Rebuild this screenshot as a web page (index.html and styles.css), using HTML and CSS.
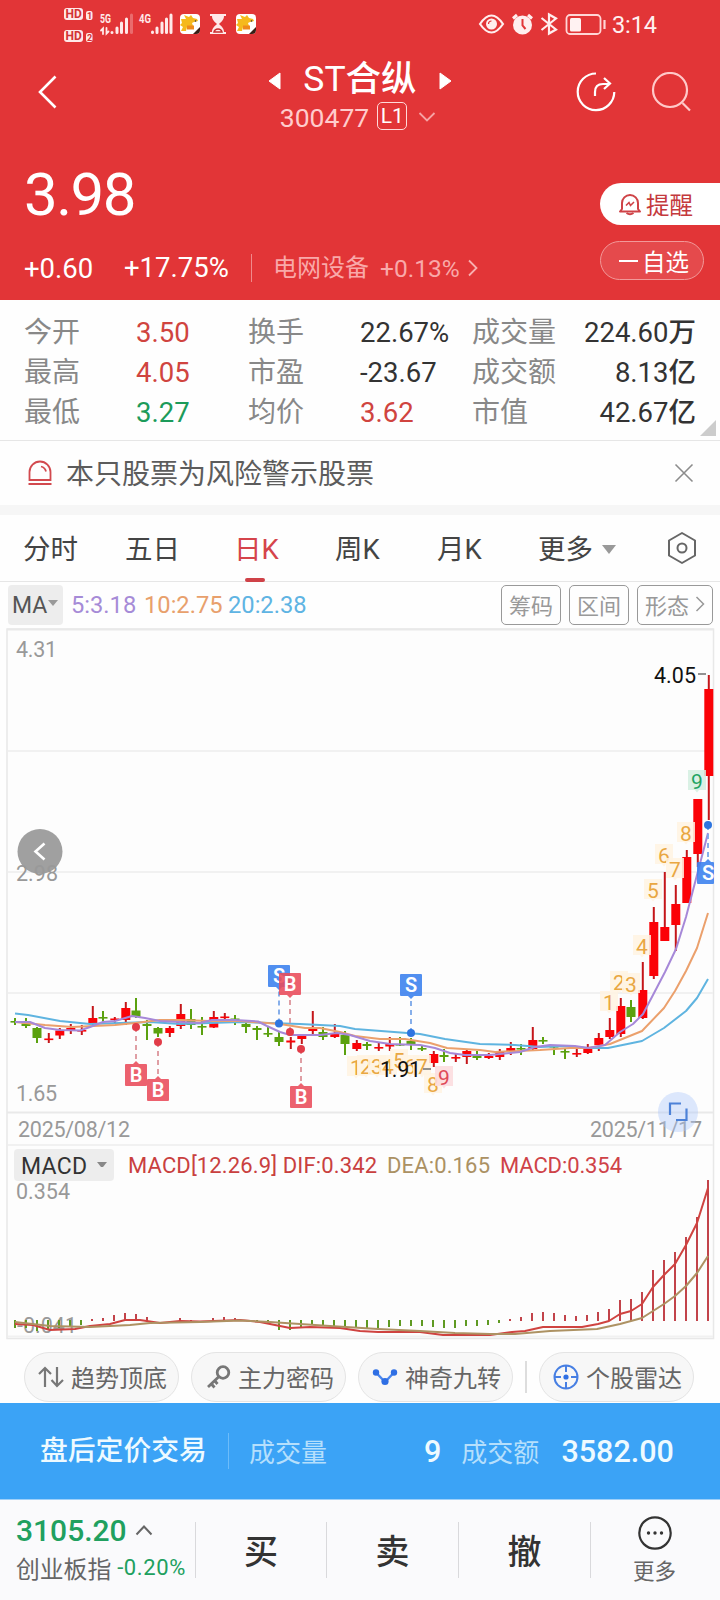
FILE: index.html
```html
<!DOCTYPE html>
<html lang="zh-CN">
<head>
  <meta charset="UTF-8">
  <meta name="viewport" content="width=device-width, initial-scale=1.0">
  <title>ST合纵 300477</title>
  <link rel="stylesheet" href="styles.css">
</head>
<body>
  <div class="app">
    <header class="header">
      <!-- Phone status bar -->
      <div class="status-bar">
        <svg class="status-left" width="200" height="40" viewBox="60 4 200 40">
          <g fill="#ffe9e9">
            <rect x="64" y="8" width="19" height="12" rx="3"/>
            <rect x="86" y="11" width="6.500" height="9" rx="2"/>
            <rect x="64" y="30" width="19" height="12" rx="3"/>
            <rect x="86" y="33" width="6.500" height="9" rx="2"/>
          </g>
          <g class="hd">
            <text x="65.500" y="18.200">HD</text><text x="87" y="18.600" class="sim">1</text>
            <text x="65.500" y="40.200">HD</text><text x="87" y="40.600" class="sim">2</text>
          </g>
          <g class="net">
            <text x="100" y="23" textLength="11" lengthAdjust="spacingAndGlyphs">5G</text>
            <text x="139" y="23" textLength="12" lengthAdjust="spacingAndGlyphs">4G</text>
          </g>
          <g stroke="#ffe9e9" stroke-width="3" stroke-linecap="round">
            <path d="M112 32.500v0M117 28v4.500M121.500 23v9.500M126.500 19v13.500"/>
            <path d="M131.500 15v17.500" opacity=".3"/>
            <path d="M152.500 32v.5M157 28v4.500M162 23v9.500M166.500 19v13.500M171 15v17.500"/>
            <path d="M103 34v-5.500l-2 2M106.500 28v5.500l2-2" fill="none" stroke-width="1.800"/>
          </g>
          <g id="app-badge">
            <rect x="180" y="14" width="20" height="20" rx="4" fill="#fff"/>
            <path d="M181 19l5 0-2-4 5 2 2-2 2 3 4 1 1 2-4 1-2 1 1 3-6 1-1 4h-5l2-4-3-2 2-2z" fill="#f5b91d"/>
            <path d="M187 25.500h7v4h-7z" fill="#ef8a1c"/>
            <path d="M193 34l7-7v3q0 4-4 4z" fill="#3a1f16"/>
            <circle cx="195.500" cy="21" r=".8" fill="#333"/>
          </g>
          <use href="#app-badge" x="56"/>
          <path d="M210 14h16v2h-2c0 4-3 6-5 8c2 2 5 4 5 8h2v2h-16v-2h2c0-4 3-6 5-8c-2-2-5-4-5-8h-2z" fill="#ffe9e9"/>
          <path d="M214 32c1-4 7-4 8 0z" fill="none" stroke="#c92d2f" stroke-width="1.500"/>
        </svg>
        <svg class="status-right" width="180" height="40" viewBox="476 4 180 40">
          <path d="M480 24q11.500-17 23 0q-11.500 17-23 0z" fill="none" stroke="#ffeeee" stroke-width="2.200"/>
          <circle cx="491.500" cy="24" r="5.500" fill="#ffeeee"/>
          <path d="M488.500 24a3 3 0 0 1 3-3" fill="none" stroke="#e23537" stroke-width="1.200"/>
          <circle cx="522.500" cy="25" r="9.500" fill="#ffeeee"/>
          <path d="M522.500 19v6.500l3 3.500" fill="none" stroke="#e23537" stroke-width="2"/>
          <path d="M513 18.500l4-3.500M532 18.500l-4-3.500" stroke="#ffeeee" stroke-width="3"/>
          <path d="M541.500 18l14.500 11.500-7 4V14.500l7 4L541.500 30" fill="none" stroke="#ffeeee" stroke-width="2.200"/>
          <rect x="566.500" y="15" width="34" height="19" rx="3.500" fill="none" stroke="#ffd6d6" stroke-width="1.800"/>
          <rect x="570" y="18" width="11" height="13.500" rx="1.500" fill="#fff2f2"/>
          <path d="M604.500 20v9" stroke="#ffd6d6" stroke-width="2.200"/>
          <text x="612" y="33" class="clock" textLength="45">3:14</text>
        </svg>
      </div>

      <!-- Title row -->
      <div class="nav">
        <svg class="back" width="24" height="36" viewBox="0 0 24 36"><path d="M20.500 2.500L5 18l15.500 15.500" fill="none" stroke="#fff" stroke-width="2.600"/></svg>
        <div class="title">
          <div class="title-name">
            <svg width="13" height="18" viewBox="0 0 13 18"><path d="M1 9L12 1v16z" fill="#fff" stroke="#fff" stroke-linejoin="round"/></svg>
            <h1>ST合纵</h1>
            <svg width="13" height="18" viewBox="0 0 13 18"><path d="M12 9L1 1v16z" fill="#fff" stroke="#fff" stroke-linejoin="round"/></svg>
          </div>
          <div class="title-code">
            <span>300477</span>
            <span class="level">L1</span>
            <svg width="18" height="12" viewBox="0 0 18 12"><path d="M1.500 2L9 9.500 16.500 2" fill="none" stroke="#f6a3a4" stroke-width="1.800"/></svg>
          </div>
        </div>
        <div class="nav-icons">
          <svg width="40" height="40" viewBox="0 0 40 40" fill="none" stroke="#fff" stroke-width="2.200">
            <path d="M20 1.500A18.300 18.300 0 1 0 38.300 20"/>
            <path d="M19 24v-4q0-8 8-8h6M28 6l6 5.500-6 5.500"/>
          </svg>
          <svg width="40" height="40" viewBox="0 0 40 40" fill="none" stroke="#ffc9c9" stroke-width="2.200">
            <circle cx="19" cy="18" r="17"/><path d="M31.500 31l7.500 7.500"/>
          </svg>
        </div>
      </div>

      <!-- Price -->
      <div class="quote">
        <div class="quote-main">
          <div class="price">3.98</div>
          <div class="change">
            <span class="diff">+0.60</span>
            <span class="percent">+17.75%</span>
            <span class="sector">电网设备</span>
            <span class="sector-rate">+0.13%</span>
            <svg width="12" height="18" viewBox="0 0 12 18"><path d="M2 1.500L9.500 9 2 16.500" fill="none" stroke="#f8b0b0" stroke-width="1.800"/></svg>
          </div>
        </div>
        <div class="quote-actions">
          <button class="btn-alert">
            <svg width="24" height="24" viewBox="0 0 24 24" fill="none" stroke="#cf4347" stroke-width="2">
              <path d="M4 17V11a8 8 0 0 1 16 0v6l2 2.500H2z" stroke-linejoin="round"/>
              <path d="M8.500 21q3.500 2.500 7 0"/><path d="M8 13.500l3-3 1.500 3 3.500-3.500" stroke-width="1.600"/>
            </svg><span>提醒</span>
          </button>
          <button class="btn-watch"><i class="minus"></i>自选</button>
        </div>
      </div>
    </header>

    <!-- Key figures -->
    <section class="stats">
      <span class="label">今开</span><span class="up">3.50</span>
      <span class="label">换手</span><span>22.67%</span>
      <span class="label">成交量</span><span class="right">224.60万</span>
      <span class="label">最高</span><span class="up">4.05</span>
      <span class="label">市盈</span><span>-23.67</span>
      <span class="label">成交额</span><span class="right">8.13亿</span>
      <span class="label">最低</span><span class="down">3.27</span>
      <span class="label">均价</span><span class="up">3.62</span>
      <span class="label">市值</span><span class="right">42.67亿</span>
      <i class="corner"></i>
    </section>

    <div class="notice">
      <svg width="26" height="26" viewBox="0 0 26 26" fill="none" stroke="#d2494e" stroke-width="1.800">
        <path d="M2.500 20V12a10.500 10.500 0 0 1 21 0v8zM1.500 24h23M14 6.500q4 1 5 5"/>
      </svg>
      <span>本只股票为风险警示股票</span>
      <svg class="close" width="20" height="20" viewBox="0 0 20 20"><path d="M1.500 1.500l17 17M18.500 1.500l-17 17" stroke="#8c8c8c" stroke-width="1.600"/></svg>
    </div>

    <nav class="tabs">
      <span class="tab">分时</span>
      <span class="tab">五日</span>
      <span class="tab active">日K</span>
      <span class="tab">周K</span>
      <span class="tab">月K</span>
      <span class="tab">更多<i class="caret"></i></span>
      <svg width="30" height="34" viewBox="0 0 30 34" fill="none" stroke="#666" stroke-width="2">
        <path d="M15 2l13 7.500v15L15 32 2 24.500v-15z" stroke-linejoin="round"/><circle cx="15" cy="17" r="4.500"/>
      </svg>
    </nav>

    <div class="ma-bar">
      <span class="ma-select">MA<i class="caret small"></i></span>
      <span class="ma5">5:3.18</span>
      <span class="ma10">10:2.75</span>
      <span class="ma20">20:2.38</span>
      <div class="ma-buttons">
        <button>筹码</button>
        <button>区间</button>
        <button>形态<svg width="10" height="16" viewBox="0 0 10 16"><path d="M1.500 1L8.500 8l-7 7" fill="none" stroke="#999" stroke-width="1.500"/></svg></button>
      </div>
    </div>

    <!-- K line and MACD -->
    <svg class="chart" width="720" height="712" viewBox="0 628 720 712">
      <rect x="7" y="629" width="706.500" height="709.500" fill="#fdfdfd" stroke="#e8e8e8" stroke-width="1.500"/>
      <path d="M7 629.500H713M7 1112.500H713" stroke="#e9e9e9" stroke-width="2.200" fill="none"/>
      <path d="M8 751H713M8 872H713M8 993H713M8 1145H713M8 1336.500H713" stroke="#f1f1f1" stroke-width="2" fill="none"/>
      <g class="axis">
        <text x="16" y="657" textLength="41">4.31</text>
        <text x="16" y="1101" textLength="41">1.65</text>
        <text x="18" y="1137" textLength="112">2025/08/12</text>
        <text x="16" y="1199" textLength="54">0.354</text>
        <text x="17" y="1333" textLength="60">-0.041</text>
      </g>
      <g id="candles"></g>
      <g id="lines"></g>
      <g id="nine"></g>
      <g id="trades"></g>
      <text class="extreme" x="654" y="682.500" textLength="42">4.05</text>
      <path d="M698 674h8" stroke="#777" stroke-width="1.600"/>
      <text class="extreme" x="380" y="1077" textLength="41">1.91</text>
      <path d="M423 1069h8" stroke="#777" stroke-width="1.600"/>

      <circle cx="40" cy="851.500" r="22.500" fill="#969696" opacity=".9"/>
      <path d="M44.500 843.500l-9 8 9 8" fill="none" stroke="#fff" stroke-width="2.600"/>
      <g class="axis">
        <text x="16" y="881" textLength="42">2.98</text>
        <text x="590" y="1137" textLength="112">2025/11/17</text>
      </g>
      <circle cx="678" cy="1112" r="20" fill="#a9c5fa" opacity=".4"/>
      <path d="M670 1115v-11.500h11M676 1120h10.500v-11.500" fill="none" stroke="#4d82d8" stroke-width="2.200"/>

      <rect x="14" y="1149" width="100" height="32" rx="4" fill="#ededed"/>
      <text x="21" y="1174" class="macd-name" textLength="66">MACD</text>
      <path d="M97 1162h10l-4 5h-2z" fill="#888"/>
      <g class="macd-text">
        <text x="128" y="1173" fill="#c9403f" textLength="249">MACD[12.26.9] DIF:0.342</text>
        <text x="387" y="1173" fill="#ab9163" textLength="103">DEA:0.165</text>
        <text x="500" y="1173" fill="#cf4248" textLength="122">MACD:0.354</text>
      </g>
      <g id="macd"></g>
    </svg>

    <!-- Indicator shortcuts -->
    <div class="tools">
      <button class="tool">
        <svg width="26" height="22" viewBox="0 0 26 22" fill="none" stroke="#777" stroke-width="2.200"><path d="M7 21V2M1 8l6-6 6 6M19 1v19M13.500 14l5.500 6 6-6"/></svg><span>趋势顶底</span>
      </button>
      <button class="tool">
        <svg width="26" height="24" viewBox="0 0 26 24" fill="none" stroke="#777" stroke-width="2.800"><circle cx="18" cy="7.500" r="5.800"/><path d="M14 11.500L3 22M6 18.500l3.500 4M9.500 15.500l3 3.500"/></svg><span>主力密码</span>
      </button>
      <button class="tool">
        <svg width="26" height="18" viewBox="0 0 26 18"><path d="M4 4.500l9 9.500 9-9.500" fill="none" stroke="#4a86ee" stroke-width="2.400"/><g fill="#2f6fe4"><circle cx="4" cy="4.500" r="3.200"/><circle cx="22" cy="4.500" r="3.200"/><circle cx="13" cy="13.500" r="3.600"/></g></svg><span>神奇九转</span>
      </button>
      <i class="tool-divider"></i>
      <button class="tool">
        <svg width="26" height="26" viewBox="0 0 26 26" fill="none" stroke="#477fe3" stroke-width="2"><circle cx="13" cy="13" r="11.500"/><path d="M13 2v6M13 18v6M2 13h6M18 13h6"/><circle cx="13" cy="13" r="2.600" fill="#2f6fe4" stroke="none"/></svg><span>个股雷达</span>
      </button>
    </div>

    <div class="after-hours">
      <strong>盘后定价交易</strong>
      <span class="muted">成交量</span>
      <b class="volume">9</b>
      <span class="muted">成交额</span>
      <b>3582.00</b>
    </div>

    <footer class="trade-bar">
      <div class="index">
        <div class="index-value">3105.20<svg width="18" height="12" viewBox="0 0 18 12"><path d="M1.500 10.500L9 2.500l7.500 8" fill="none" stroke="#666" stroke-width="2"/></svg></div>
        <div class="index-name">创业板指<span>-0.20%</span></div>
      </div>
      <div class="action">买</div>
      <div class="action">卖</div>
      <div class="action last">撤</div>
      <div class="more">
        <svg width="34" height="34" viewBox="0 0 34 34"><circle cx="17" cy="17" r="15.700" fill="none" stroke="#333" stroke-width="2.200"/><g fill="#333"><circle cx="10.500" cy="17" r="1.700"/><circle cx="17" cy="17" r="1.700"/><circle cx="23.500" cy="17" r="1.700"/></g></svg>
        <span>更多</span>
      </div>
    </footer>
  </div>
  <script src="chart.js"></script>
</body>
</html>
```
FILE: styles.css
```css
* {
  box-sizing: border-box;
  margin: 0;
  padding: 0;
}

body {
  width: 720px;
  font-family: Roboto, "Noto Sans CJK SC", sans-serif;
  background-color: #fefefe;
  color: #333;
}

button {
  font-family: inherit;
  border: none;
  background: none;
}

svg {
  display: block;
  flex-shrink: 0;
}

.app {
  height: 1600px;
  display: flex;
  flex-direction: column;
  overflow: hidden;
}

/* Header */
.header {
  height: 300px;
  background-color: #e23537;
  color: #fff;
}

.status-bar {
  height: 44px;
  padding: 4px 64px 0 60px;
  display: flex;
  justify-content: space-between;
}

.status-right {
  overflow: visible;
}

.hd text {
  font-size: 12px;
  font-weight: 700;
  fill: #d23335;
}

.hd .sim {
  font-size: 9px;
}

.net text {
  font-size: 12px;
  font-weight: 700;
  fill: #ffe9e9;
}

.clock {
  font-size: 23.5px;
  fill: #fff0f0;
}

.nav {
  height: 106px;
  display: grid;
  grid-template-columns: 200px 320px 200px;
}

.back {
  margin: 30px 0 0 35px;
}

.title {
  display: flex;
  flex-direction: column;
  align-items: center;
  padding-top: 12px;
}

.title-name {
  display: flex;
  align-items: center;
  gap: 22px;
  height: 46px;
}

.title-name svg {
  margin-top: 3px;
}

.title-name h1 {
  font-size: 35.5px;
  font-weight: 450;
  line-height: 46px;
}

.title-code {
  display: flex;
  align-items: center;
  height: 30px;
  margin-left: -4px;
  font-size: 26.5px;
  color: #ffcccc;
}

.level {
  width: 30px;
  height: 28px;
  margin: -2px 11px 0 8px;
  border: 1.5px solid #ffd9d9;
  border-radius: 5px;
  font-size: 21px;
  line-height: 26px;
  text-align: center;
  color: #fff;
}

.nav-icons {
  display: flex;
  gap: 35px;
  padding: 28px 0 0 56px;
}

.quote {
  height: 150px;
  display: flex;
  justify-content: space-between;
}

.quote-main {
  padding-left: 24px;
}

.price {
  height: 90px;
  font-size: 60px;
  font-weight: 450;
  line-height: 89px;
  letter-spacing: -1.5px;
}

.change {
  display: flex;
  align-items: center;
  height: 56px;
  font-size: 27.5px;
  font-weight: 450;
}

.diff {
  width: 100px;
}

.percent {
  width: 128px;
  line-height: 28px;
  border-right: 1.5px solid #f08a8b;
}

.sector {
  margin-left: 21px;
  font-size: 24px;
  font-weight: 400;
  line-height: 30px;
  color: #f9a9a9;
}

.sector-rate {
  margin: 0 7px 0 11px;
  font-size: 24.5px;
  font-weight: 400;
  color: #f9a9a9;
}

.quote-actions {
  width: 120px;
  padding-top: 33px;
}

.btn-alert {
  display: flex;
  align-items: center;
  gap: 4px;
  width: 120px;
  height: 42px;
  padding-left: 18px;
  border-radius: 21px 0 0 21px;
  background-color: #fff;
  color: #c4393d;
  font-size: 23.5px;
}

.btn-watch {
  display: flex;
  align-items: center;
  gap: 4px;
  width: 104px;
  height: 39px;
  margin-top: 16px;
  padding-left: 18px;
  border: 1px solid #f29999;
  border-radius: 20px;
  background-color: #e54a4c;
  color: #fff;
  font-size: 23.5px;
}

.minus {
  width: 19px;
  height: 2px;
  background-color: #fff;
}

/* Key figures */
.stats {
  position: relative;
  height: 141px;
  padding: 13px 24px 0 24px;
  display: grid;
  grid-template-columns: 112px 112px 112px 112px 84px 1fr;
  grid-template-rows: repeat(3, 40px);
  border-bottom: 1px solid #e6e6e6;
  font-size: 27.5px;
  font-weight: 450;
  line-height: 40px;
  white-space: nowrap;
}

.stats .label {
  color: #888;
  font-size: 28px;
  font-weight: 400;
}

.stats .up {
  color: #d0443f;
}

.stats .down {
  color: #1c9b5a;
}

.stats .right {
  text-align: right;
}

.corner {
  position: absolute;
  right: 4px;
  bottom: 4px;
  border-left: 16px solid transparent;
  border-bottom: 16px solid #ccc;
}

.notice {
  height: 74px;
  padding: 0 26px 0 27px;
  display: flex;
  align-items: center;
  border-bottom: 10px solid #f6f6f6;
  font-size: 28px;
  color: #5c5c5c;
}

.notice span {
  margin-left: 13px;
  padding-top: 4px;
  line-height: 40px;
}

.close {
  margin-left: auto;
}

/* Period tabs */
.tabs {
  height: 67px;
  padding-left: 23px;
  display: grid;
  grid-template-columns: 102px 109px 101px 102px 101px 129px 30px;
  align-items: center;
  border-bottom: 1px solid #e6e6e6;
  font-size: 27.5px;
  line-height: 62px;
  color: #444;
}

.tab {
  padding-top: 4px;
}

.tab.active {
  position: relative;
  color: #d5444b;
}

.tab.active::after {
  content: "";
  position: absolute;
  left: 11px;
  bottom: -1px;
  width: 20px;
  height: 4px;
  border-radius: 2px;
  background-color: #cf4248;
}

.caret {
  display: inline-block;
  margin-left: 9px;
  vertical-align: 5px;
  border: 7px solid transparent;
  border-top: 9px solid #999;
  border-bottom: none;
}

.caret.small {
  margin-left: 1px;
  vertical-align: 7px;
  border-width: 6px 5px 0;
}

.ma-bar {
  height: 46px;
  padding: 0 7px 0 8px;
  display: flex;
  align-items: center;
  font-size: 23.7px;
}

.ma-select {
  width: 55px;
  height: 40px;
  margin-right: 8px;
  padding-left: 4px;
  border-radius: 4px;
  background-color: #ededed;
  line-height: 42px;
  font-size: 23px;
  color: #555;
  white-space: nowrap;
}

.ma5 {
  width: 73px;
  color: #a68bd7;
}

.ma10 {
  width: 84px;
  color: #e8a06c;
}

.ma20 {
  color: #5fb4e3;
}

.ma-buttons {
  display: flex;
  gap: 8px;
  margin-left: auto;
}

.ma-buttons button {
  display: flex;
  align-items: center;
  gap: 6px;
  height: 40px;
  padding: 0 7px 2px;
  border: 1px solid #999;
  border-radius: 5px;
  font-size: 22px;
  color: #999;
}

/* Chart text */
.axis text {
  font-size: 21.5px;
  fill: #999;
}

.extreme {
  font-size: 21.5px;
  fill: #111;
}

.macd-name {
  font-size: 23px;
  fill: #333;
}

.macd-text text {
  font-size: 22px;
}

.nine-text {
  font-size: 21px;
  text-anchor: middle;
}

.trade-text {
  font-size: 20px;
  font-weight: 600;
  fill: #fff;
  text-anchor: middle;
}

/* Shortcuts */
.tools {
  height: 63px;
  padding: 12px 24px 0;
  display: flex;
  gap: 12px;
}

.tool {
  display: flex;
  align-items: center;
  gap: 7px;
  width: 155px;
  height: 50px;
  padding-left: 13px;
  border: 1px solid #e4e4e4;
  border-radius: 25px;
  background-color: #f7f7f7;
  font-size: 24px;
  color: #666;
  white-space: nowrap;
}

.tool span {
  padding-bottom: 2px;
}

.tool-divider {
  width: 2px;
  height: 32px;
  margin-top: 9px;
  background-color: #ddd;
}

.after-hours {
  height: 97px;
  padding-left: 40px;
  display: flex;
  align-items: center;
  background-color: #3ba3f6;
  border-bottom: 1px solid #9fd0f8;
  font-size: 26px;
  color: #eefaff;
}

.after-hours strong {
  width: 189px;
  font-size: 27.8px;
  font-weight: 500;
  line-height: 36px;
  border-right: 1.5px solid #6cbcfa;
}

.after-hours .muted {
  margin-left: 20px;
  padding-bottom: 2px;
  color: #b5dffc;
}

.after-hours b {
  margin-left: 22px;
  font-size: 30.5px;
  font-weight: 500;
}

.after-hours .volume {
  margin-left: 97px;
}

/* Bottom bar */
.trade-bar {
  height: 100px;
  display: grid;
  grid-template-columns: 195px 131px 132px 133px 1fr;
  background-color: #fafafc;
}

.index {
  padding: 10px 0 0 16px;
}

.index-value {
  display: flex;
  align-items: center;
  gap: 8px;
  height: 40px;
  font-size: 30px;
  font-weight: 500;
  color: #20a05f;
}

.index-name {
  display: flex;
  align-items: center;
  gap: 6px;
  height: 34px;
  font-size: 23.8px;
  color: #666;
  white-space: nowrap;
}

.index-name span {
  font-size: 22px;
  letter-spacing: 0.6px;
  color: #20a05f;
}

.action {
  height: 56px;
  margin-top: 22px;
  border-left: 1px solid #d9d9dc;
  font-size: 34px;
  font-weight: 500;
  line-height: 61px;
  text-align: center;
  color: #333;
}

.action.last {
  border-right: 1px solid #d9d9dc;
}

.more {
  display: flex;
  flex-direction: column;
  align-items: center;
  padding: 16px 2px 0 0;
  font-size: 21.5px;
  line-height: 30px;
  color: #666;
}

.more span {
  margin-top: 7px;
}
```
FILE: chart.js
```js
const STEP = 11;
const X0 = 15;
const RED = '#fb0207';
const GREEN = '#5ba10f';

const xAt = i => X0 + i * STEP;
const put = (id, html) => { document.getElementById(id).innerHTML += html; };

// [up, high, low, body top, body bottom]
const candles = [
  [0,1018,1025,1021,1022.5],[0,1018,1028,1023.5,1026],[0,1027,1043,1028,1038],[1,1033,1043,1038.5,1040],
  [1,1028,1039,1030.5,1035.5],[1,1024,1034,1028,1031],[1,1025,1035,1030,1031],[1,1006,1025,1018,1024],
  [0,1011,1022,1017,1018],[1,1017,1023,1018.5,1020],[1,1002,1025,1008,1020],[0,998,1018,1010.5,1017],
  [0,1020,1040,1024,1026],[0,1027,1037,1028,1033.5],[1,1026,1037,1028,1033],[1,1004,1029,1014,1026],
  [0,1009,1029,1019,1025],[0,1017,1035,1026,1027.5],[1,1011,1028,1017,1027.5],[1,1013,1019,1016.5,1018],
  [0,1015,1025,1018.5,1020],[0,1023,1033,1024,1027],[0,1026,1040,1028,1030],[0,1027,1037,1033,1034],
  [0,1032,1046,1037,1042],[1,1037,1049,1040.5,1042.5],[1,1034,1044,1036,1039],[1,1011,1034,1029,1031],
  [0,1027,1040,1032,1037],[1,1024,1038,1034,1037],[0,1031,1055,1035,1044],[1,1040,1051,1043,1049],
  [0,1042,1050,1044,1046],[1,1043,1051,1047,1048],[1,1037,1051,1044,1046.5],[0,1037,1046,1044,1045],
  [0,1038,1050,1041,1045],[0,1045,1051,1048,1049],[1,1051,1067,1054,1063],[0,1049,1062,1055,1057],
  [1,1053,1062,1057,1058],[1,1050,1064,1051,1057],[0,1051,1060,1055,1058],[1,1053,1059,1056,1058],
  [1,1049,1060,1052,1057],[1,1042,1055,1048,1051],[0,1044,1055,1048,1049],[1,1027,1050,1040,1049],
  [0,1037,1044,1040,1041.5],[0,1046,1055,1046,1047],[0,1049,1059,1051,1052],[1,1049,1057,1053,1054],
  [1,1044,1054,1049,1053],[1,1033,1051,1038,1045],[1,1018,1039,1030,1037],[1,998,1037,1006,1034],
  [0,1000,1022,1007,1017],[1,962,1019,990,1018],[1,907,979,922,976],[1,872,940,927,941],
  [1,885,951,904,925],[1,850,903,857,903],[1,799,867,799,854],[1,675,820,689,776]
];

candles.forEach(([up, high, low, top, bottom], i) => {
  const x = xAt(i) + (up ? 0.8 : 0);
  const color = up ? RED : GREEN;
  const wick = up ? '#c4161a' : color;
  put('candles', `<path d="M${x} ${high}V${low}" stroke="${wick}" stroke-width="2"/>
    <rect x="${x - 4.5}" y="${top}" width="9" height="${Math.max(bottom - top, 1.6)}" fill="${color}"/>`);
});

function line(id, color, points) {
  put(id, `<polyline points="${points}" fill="none" stroke="${color}" stroke-width="2" stroke-linejoin="round"/>`);
}

// MA20, MA10, MA5
line('lines', '#5fb4e0', '15,1013.5 28,1015 60,1021 90,1024 120,1023 150,1022 180,1024 210,1023 240,1022 300,1024 340,1026 355,1029 420,1034 445,1039 480,1044 515,1045 540,1047 565,1046 588,1048 608,1048 642,1041 664,1028 686,1011 697,998 708,979');
line('lines', '#eba06c', '15,1022 45,1025 72,1027 115,1025 135,1023 160,1020 180,1020 210,1021 240,1021 280,1024 305,1028 320,1028 340,1032 355,1036 380,1039 405,1039 430,1043 447,1048 480,1050 495,1052 540,1050 570,1048 588,1048 610,1044 642,1031 664,1008 675,991 686,971 697,948 708,913');
line('lines', '#a688d8', '15,1022 30,1022 45,1028 60,1030 80,1030.5 90,1027 103,1022 115,1021 132,1016 145,1018 160,1021 180,1022 200,1023 212,1020 235,1020 258,1021.5 267,1026 280,1032 290,1035 320,1035 337,1033 350,1035 370,1041 390,1044 420,1045 435,1048 450,1053 465,1055 490,1055 520,1052 535,1047 550,1045 575,1046 588,1048 605,1045 620,1032 633,1024 643,1014 653,995 665,972 676,949 686,917 708,833');

// Nine-turn counters: [text, x, center y, theme]
const nine = [
  [1,356,1067],[2,366,1066],[3,377,1066],[4,388,1066],[5,399,1060],[6,410,1066],[7,422,1066],[8,433,1084],[9,444,1077,'pink'],
  [1,609,1002],[2,619,982],[3,631,984],[4,642,946],[5,653,890],[6,664,855],[7,675,869],[8,686,833],[9,697,781,'green']
];
const nineColors = {
  gold: ['#fff3e2', '#e9a742'],
  pink: ['#fbdadd', '#df4b58'],
  green: ['#d3efe0', '#1fa463']
};
nine.forEach(([n, x, y, theme]) => {
  const [bg, fg] = nineColors[theme || 'gold'];
  put('nine', `<path d="M${x - 9} ${y - 11}h18v20h-7l-2 2.500l-2-2.500h-7z" fill="${bg}" opacity=".85"/>
    <text class="nine-text" x="${x}" y="${y + 7.5}" fill="${fg}">${n}</text>`);
});

// Buy and sell marks: [letter, x, dot y, box top]
const trades = [
  ['B',136,1027,1064],['B',158,1042,1079],['S',279,1023.5,965],['B',290,1032,973],
  ['B',301,1049,1086],['S',411,1033,974],['S',708,825,862]
];
trades.forEach(([type, x, dot, top]) => {
  const buy = type === 'B';
  const fill = buy ? '#ea4c5b' : '#3a80ef';
  const below = top > dot;
  const edge = below ? top - 2 : top + 24;
  const tip = below ? `M${x - 3} ${top}l3-3l3 3z` : `M${x - 3} ${top + 22}l3 3l3-3z`;
  // the last mark is cut off by the chart frame
  const width = Math.min(22, 714 - (x - 11));
  put('trades', `<path d="M${x} ${dot}V${edge}" stroke="${buy ? '#dc949b' : '#7ba7e8'}" stroke-width="1.8" stroke-dasharray="5 4"/>
    <circle cx="${x}" cy="${dot}" r="4" fill="${buy ? '#e23c48' : '#2e75e0'}"/>
    <g fill="${fill}" opacity=".88"><rect x="${x - 11}" y="${top}" width="${width}" height="22" rx="1"/><path d="${tip}"/></g>
    <text class="trade-text" x="${x}" y="${top + 18}">${type}</text>`);
});

// MACD columns, height in px; negative is green
const ZERO = 1321;
const macd = [
  -7,-7,-10,-9,-7,-6,-4,2,3,6,8,7,4,0,0,3,1,0,3,4,3,1,-1,-3,-9,-9,-7,-4,-5,-5,-5,-6,
  -7,-8,-6,-5,-5,-5,-6,-7,-7,-5,-5,-4,-2,2,4,8,9,8,6,5,6,9,12,21,22,29,51,61,69,84,104,141
];
macd.forEach((h, i) => {
  if (!h) return;
  const color = h > 0 ? '#c2434a' : '#5f9a22';
  const from = h > 0 ? ZERO : ZERO - 1;
  put('macd', `<path d="M${xAt(i)} ${from}V${ZERO - h}" stroke="${color}" stroke-width="2"/>`);
});
line('macd', '#cf4340', '15,1324 33,1325 50,1330 75,1329 90,1326 110,1324 125,1320 140,1320 160,1323 180,1321 200,1321.5 240,1320 260,1322 290,1328 310,1327 340,1328 360,1331 378,1332 420,1332 443,1335 490,1335 512,1332 525,1331 543,1327 582,1327 598,1324 609,1321 620,1314 631,1311 642,1304 653,1287 664,1275 675,1264 686,1245 697,1223 708,1188');
line('macd', '#ad9263', '15,1322 50,1326 90,1327 130,1325 150,1323 200,1322 240,1320.5 270,1322 300,1324 330,1326 378,1329 420,1331 455,1333 490,1334 515,1334 550,1331 597,1329 620,1324 642,1318 664,1304 675,1296 686,1286 697,1273 708,1256');
```
